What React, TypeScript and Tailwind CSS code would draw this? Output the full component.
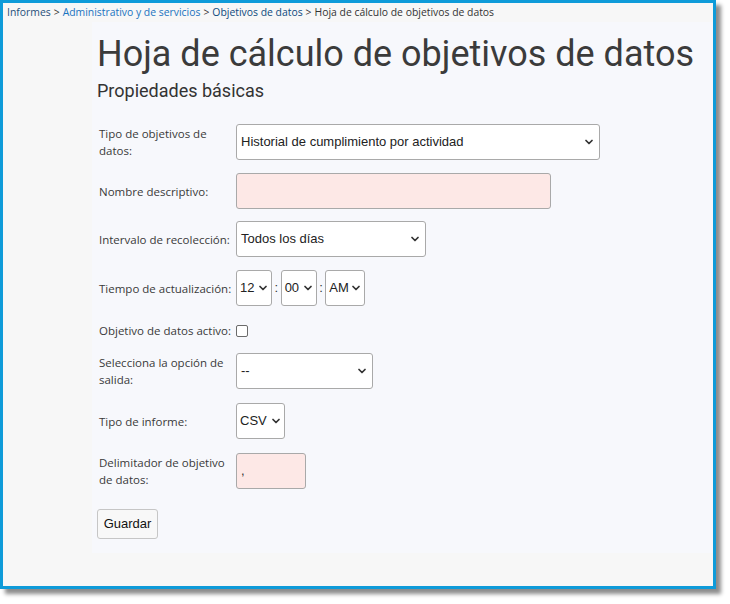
import React from 'react';
import { ChevronDown } from 'lucide-react';

const labelFont = { fontFamily: '"Open Sans", "Noto Sans", sans-serif' };
const fieldFont = { fontFamily: '"Liberation Sans", Arial, sans-serif' };

interface SelectProps {
  value: string;
  width: string;
  small?: boolean;
}

const Dropdown: React.FC<SelectProps> = ({ value, width, small }) => (
  <div className={`relative h-[36px] ${width}`}>
    <div
      className={`flex h-full items-center rounded-[3px] border border-[#a9a9a9] bg-white text-[13px] text-[#222] ${small ? 'pl-[3px]' : 'pl-[4px]'}`}
      style={fieldFont}
    >
      {value}
    </div>
    <ChevronDown
      size={12}
      strokeWidth={3.5}
      className={`absolute top-1/2 -translate-y-1/2 text-[#333] ${small ? 'right-[3px]' : 'right-[5px]'}`}
    />
  </div>
);

const Row: React.FC<{ label: React.ReactNode; children: React.ReactNode; className?: string }> = ({ label, children, className }) => (
  <div className={`flex items-center ${className ?? ''}`}>
    <div className="w-[139px] pl-[2px] text-[11.5px] leading-[17px] text-[#3a3a3a]" style={labelFont}>
      {label}
    </div>
    {children}
  </div>
);

export default function App() {
  return (
    <div className="h-[604px] w-[730px] bg-white">
      <div className="flex h-[589px] w-[716px] flex-col border-[3px] border-[#0e9bd9] bg-[#f7f7f7] shadow-[5px_5px_4px_rgba(0,0,0,0.45)]">
        {/* breadcrumbs */}
        <div className="flex h-[19px] items-center pl-[4px] text-[10.4px] text-[#333]" style={labelFont}>
          <span className="text-[#1f4f7a]">Informes</span>
          <span className="mx-[3px]">&gt;</span>
          <span className="text-[#1a73c0]">Administrativo y de servicios</span>
          <span className="mx-[3px]">&gt;</span>
          <span className="text-[#0d4a7d]">Objetivos de datos</span>
          <span className="mx-[3px]">&gt;</span>
          <span>Hoja de cálculo de objetivos de datos</span>
        </div>

        <div className="ml-[89px] flex h-[531px] flex-col bg-[#f7f8fc] pl-[5px]">
          <h1
            className="mt-[10px] text-[36px] leading-[44px] text-[#3b3b3b]"
            style={{ fontFamily: 'Roboto, sans-serif' }}
          >
            Hoja de cálculo de objetivos de datos
          </h1>
          <h2
            className="mt-[3px] text-[18px] leading-[24px] text-[#333]"
            style={{ fontFamily: 'Roboto, sans-serif' }}
          >
            Propiedades básicas
          </h2>

          <div className="mt-[17px] flex flex-col">
            <Row label={<>Tipo de objetivos de<br />datos:</>} className="mt-[4px]">
              <Dropdown value="Historial de cumplimiento por actividad" width="w-[364px]" />
            </Row>

            <Row label="Nombre descriptivo:" className="mt-[13px]">
              <div className="h-[36px] w-[315px] rounded-[3px] border border-[#a9a9a9] bg-[#fde8e6]" />
            </Row>

            <Row label="Intervalo de recolección:" className="mt-[12px]">
              <Dropdown value="Todos los días" width="w-[190px]" />
            </Row>

            <Row label="Tiempo de actualización:" className="mt-[13px]">
              <div className="flex items-center text-[13px] text-[#333]" style={fieldFont}>
                <Dropdown value="12" width="w-[36px]" small />
                <span className="mx-[2.5px]">:</span>
                <Dropdown value="00" width="w-[36px]" small />
                <span className="mx-[2.5px]">:</span>
                <Dropdown value="AM" width="w-[40px]" small />
              </div>
            </Row>

            <Row label="Objetivo de datos activo:" className="mt-[16px]">
              <div className="h-[12px] w-[12px] rounded-[2px] border border-[#6b6b6b] bg-white" />
            </Row>

            <Row label={<>Selecciona la opción de<br />salida:</>} className="mt-[14px]">
              <Dropdown value="--" width="w-[137px]" />
            </Row>

            <Row label="Tipo de informe:" className="mt-[14px]">
              <Dropdown value="CSV" width="w-[49px]" small />
            </Row>

            <Row label={<>Delimitador de objetivo<br />de datos:</>} className="mt-[14px]">
              <div
                className="flex h-[36px] w-[70px] items-center rounded-[3px] border border-[#a9a9a9] bg-[#fde8e6] pl-[4px] text-[13px] text-[#333]"
                style={fieldFont}
              >
                ,
              </div>
            </Row>

            <div className="mt-[20px]">
              <button
                className="h-[30px] w-[61px] rounded-[3px] border border-[#c6c6c6] bg-[#f8f8f8] text-[13px] text-[#111]"
                style={fieldFont}
              >
                Guardar
              </button>
            </div>
          </div>
        </div>
      </div>
    </div>
  );
}
